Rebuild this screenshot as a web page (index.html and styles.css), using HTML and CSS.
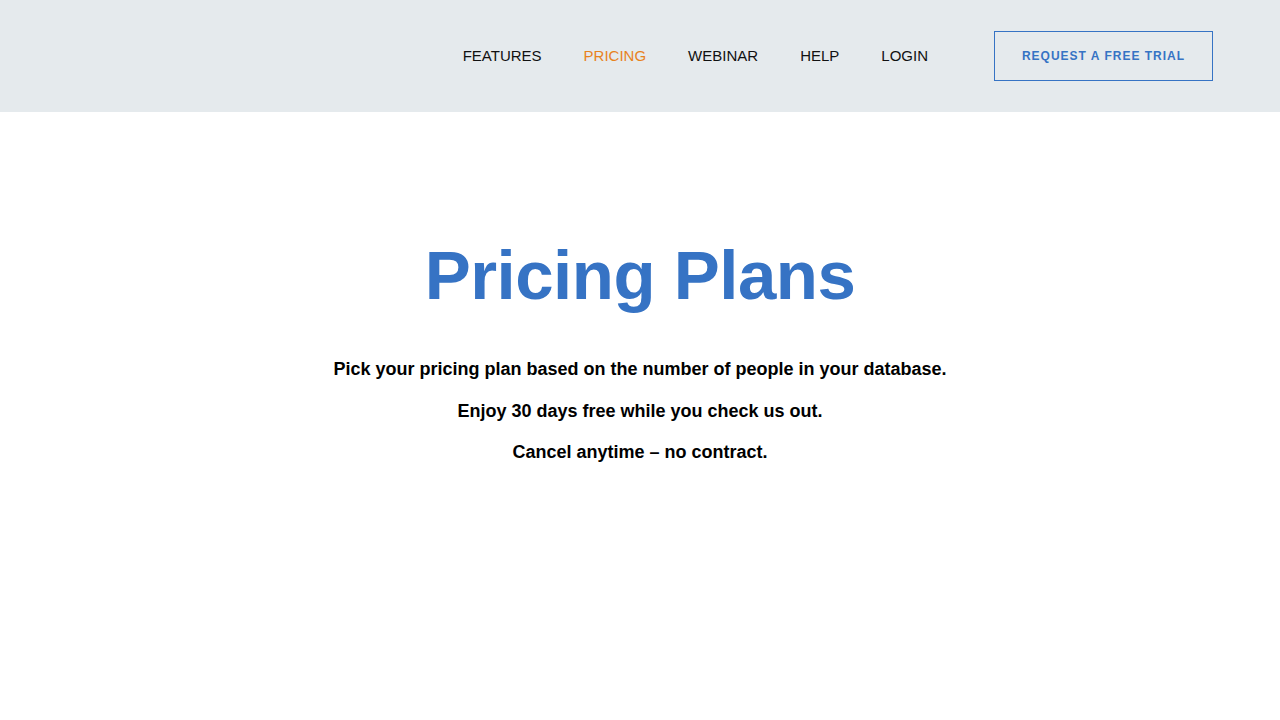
FILE: index.html
```html
<!DOCTYPE html>
<html lang="en">
<head>
<meta charset="utf-8">
<title>Pricing Plans</title>
<link rel="stylesheet" href="styles.css">
</head>
<body>
<header class="site-header">
  <nav class="main-nav">
    <a class="nav-link" href="#">FEATURES</a>
    <a class="nav-link active" href="#">PRICING</a>
    <a class="nav-link" href="#">WEBINAR</a>
    <a class="nav-link" href="#">HELP</a>
    <a class="nav-link" href="#">LOGIN</a>
  </nav>
  <a class="trial-btn" href="#">REQUEST A FREE TRIAL</a>
</header>
<main class="hero">
  <h1 class="hero-title">Pricing Plans</h1>
  <p class="hero-text">Pick your pricing plan based on the number of people in your database.</p>
  <p class="hero-text">Enjoy 30 days free while you check us out.</p>
  <p class="hero-text">Cancel anytime – no contract.</p>
</main>
</body>
</html>
```
FILE: styles.css
```css
* { box-sizing: border-box; }
html, body { margin: 0; padding: 0; }
body {
  font-family: "Liberation Sans", Arial, sans-serif;
  background: #ffffff;
  color: #000;
}
.site-header {
  height: 112px;
  background: #e5eaed;
  display: flex;
  align-items: center;
  justify-content: flex-end;
  padding-right: 67px;
}
.main-nav {
  display: flex;
  align-items: center;
  gap: 42px;
  margin-right: 66px;
}
.nav-link {
  font-size: 15px;
  color: #111;
  text-decoration: none;
  line-height: 20px;
}
.nav-link.active { color: #e8821e; }
.trial-btn {
  display: flex;
  align-items: center;
  justify-content: center;
  width: 219px;
  height: 50px;
  border: 1px solid #3673c4;
  color: #3673c4;
  font-size: 12px;
  font-weight: bold;
  letter-spacing: 1px;
  text-decoration: none;
}
.hero {
  display: flex;
  flex-direction: column;
  align-items: center;
  padding-top: 120px;
}
.hero-title {
  margin: 0 0 39px;
  font-size: 69px;
  line-height: 88px;
  font-weight: bold;
  color: #3673c4;
  letter-spacing: -0.5px;
}
.hero-text {
  margin: 0 0 21px;
  font-size: 18px;
  line-height: 20.5px;
  font-weight: bold;
  color: #000;
}
```
